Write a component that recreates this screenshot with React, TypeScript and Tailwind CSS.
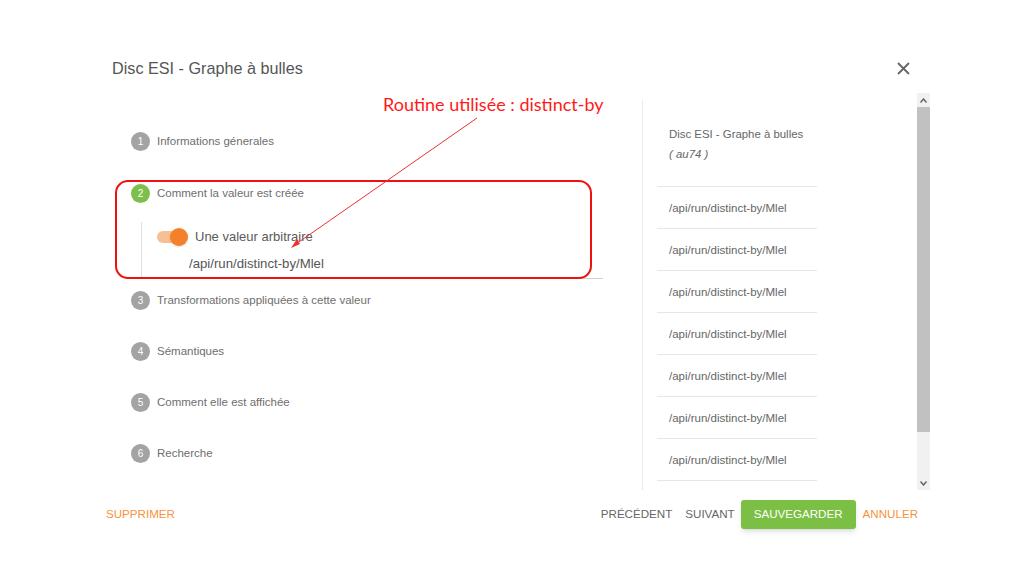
import React from "react";

const steps = [
  "Informations génerales",
  "Comment la valeur est créée",
  "Transformations appliquées à cette valeur",
  "Sémantiques",
  "Comment elle est affichée",
  "Recherche",
];

const routes = Array.from({ length: 7 }, () => "/api/run/distinct-by/Mlel");

function StepBadge({ n, active }: { n: number; active?: boolean }) {
  return (
    <div
      className={
        "w-[19px] h-[19px] rounded-full flex items-center justify-center text-[10px] text-white " +
        (active ? "bg-[#7cc04b]" : "bg-[#a3a3a3]")
      }
    >
      {n}
    </div>
  );
}

function StepRow({ n, label, active }: { n: number; label: string; active?: boolean }) {
  return (
    <div className="flex items-center gap-[7px] h-[19px]">
      <StepBadge n={n} active={active} />
      <span className="text-[11.5px] text-[#6e6e6e]">{label}</span>
    </div>
  );
}

export default function App() {
  return (
    <div className="relative w-[1024px] h-[576px] bg-white overflow-hidden font-['Liberation_Sans',Arial,sans-serif]">
      <div className="mx-[95px] pt-[43px]">
        {/* header */}
        <div className="h-[50px] flex items-center justify-between pl-[17px] pr-[19px]">
          <h1 className="text-[16.2px] text-[#555]">Disc ESI - Graphe à bulles</h1>
          <svg width="13" height="13" viewBox="0 0 13 13" className="text-[#666]">
            <path d="M1 1L12 12M12 1L1 12" stroke="currentColor" strokeWidth="1.8" />
          </svg>
        </div>

        {/* body */}
        <div className="flex h-[399px]">
          <div className="w-[547px] pl-[36px] pt-[39px]">
            <StepRow n={1} label={steps[0]} />
            <div className="mt-[33px]">
              <StepRow n={2} label={steps[1]} active />
            </div>
            <div className="ml-[10px] mt-[19px] border-l border-[#e0e0e0] pl-[15px] pt-[5px] h-[55px]">
              <div className="flex items-center gap-[7px]">
                <div className="relative w-[31px] h-[18px] flex items-center">
                  <div className="w-[27px] h-[12px] rounded-full bg-[#f8c092]" />
                  <div className="absolute right-0 w-[18px] h-[18px] rounded-full bg-[#f4812a] shadow-sm" />
                </div>
                <span className="text-[13px] text-[#5a5a5a]">Une valeur arbitraire</span>
              </div>
              <div className="ml-[32px] mt-[7px] w-[414px] border-b border-[#d0d0d0] pb-[5px] text-[13.2px] text-[#555]">
                /api/run/distinct-by/Mlel
              </div>
            </div>
            <div className="mt-[14px] flex flex-col gap-[32px]">
              {steps.slice(2).map((s, i) => (
                <StepRow key={s} n={i + 3} label={s} />
              ))}
            </div>
          </div>

          {/* right panel */}
          <div className="flex-1 flex border-l border-[#ebebeb] mt-[7px] mb-[2px]">
            <div className="flex-1 pl-[14px] -mt-[7px]">
              <div className="w-[160px] border-b border-[#e6e6e6] pt-[31px] pb-[22px] pl-[12px] text-[11.4px] leading-5 text-[#666]">
                <div>Disc ESI - Graphe à bulles</div>
                <div className="italic">( au74 )</div>
              </div>
              {routes.map((r, i) => (
                <div
                  key={i}
                  className="w-[160px] h-[42px] border-b border-[#e6e6e6] pl-[12px] pt-[2px] flex items-center text-[11.5px] text-[#666]"
                >
                  {r}
                </div>
              ))}
            </div>
            {/* scrollbar */}
            <div className="w-[13px] -mt-[7px] mr-[-1px] bg-[#f1f1f1] flex flex-col">
              <div className="h-[14px] flex items-center justify-center">
                <svg width="7" height="5" viewBox="0 0 7 5">
                  <path d="M0.5 4.5L3.5 1L6.5 4.5" stroke="#606060" strokeWidth="1.4" fill="none" />
                </svg>
              </div>
              <div className="h-[325px] bg-[#c1c1c1]" />
              <div className="flex-1" />
              <div className="h-[14px] flex items-center justify-center">
                <svg width="7" height="5" viewBox="0 0 7 5">
                  <path d="M0.5 0.5L3.5 4L6.5 0.5" stroke="#606060" strokeWidth="1.4" fill="none" />
                </svg>
              </div>
            </div>
          </div>
        </div>

        {/* footer */}
        <div className="h-[44px] flex items-center justify-between pl-[11px] pr-[11px] text-[11.6px]">
          <button className="uppercase text-[#f7923a]">SUPPRIMER</button>
          <div className="flex items-center">
            <button className="uppercase text-[#666] mr-[13px]">PRÉCÉDENT</button>
            <button className="uppercase text-[#666] mr-[6px]">SUIVANT</button>
            <button className="uppercase h-[29px] px-[13px] rounded-[3px] bg-[#7bbf44] text-white shadow-md mr-[7px]">
              SAUVEGARDER
            </button>
            <button className="uppercase text-[#f7923a]">ANNULER</button>
          </div>
        </div>
      </div>

      {/* annotation overlay */}
      <div className="absolute left-[383px] top-[92px] text-[18px] text-[#ff1a1a] font-['Lato',sans-serif] leading-6">
        Routine utilisée : distinct-by
      </div>
      <div className="absolute left-[115px] top-[180px] w-[477px] h-[99px] border-2 border-[#ee1111] rounded-[13px] pointer-events-none" />
      <svg className="absolute left-0 top-0 pointer-events-none" width="1024" height="576">
        <line x1="477" y1="118" x2="296" y2="244" stroke="#f03030" strokeWidth="1" />
        <path d="M291 248L297 239L300 244Z" fill="#f03030" />
      </svg>
    </div>
  );
}
